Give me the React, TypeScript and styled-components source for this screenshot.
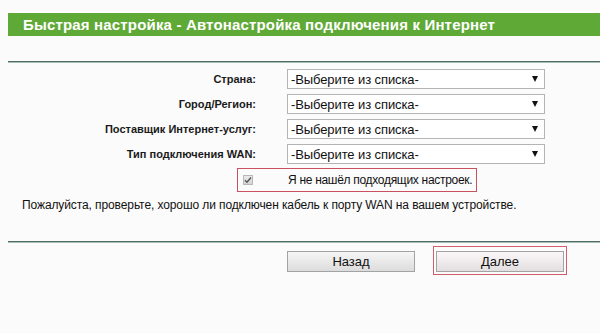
import React from "react";
import styled, { createGlobalStyle } from "styled-components";

const GlobalStyle = createGlobalStyle`
  html, body {
    margin: 0;
    padding: 0;
    background: #fbfbfb;
  }
  body {
    font-family: "Liberation Sans", Arial, sans-serif;
    color: #111;
  }
`;

const Page = styled.div`
  width: 600px;
  height: 333px;
  padding-left: 8px;
  box-sizing: border-box;
  overflow: hidden;
`;

const TitleBar = styled.div`
  margin-top: 13px;
  height: 23px;
  background: #5fa936;
  color: #fff;
  font-weight: bold;
  font-size: 15px;
  letter-spacing: 0.17px;
  line-height: 23px;
  padding-left: 15px;
  white-space: nowrap;
`;

const Rule = styled.div<{ $top: number }>`
  margin-top: ${(p) => p.$top}px;
  height: 2px;
  background: linear-gradient(#4d6c63 0 1px, #a9beb6 1px 2px);
`;

const Form = styled.div`
  display: grid;
  grid-template-columns: 248px 258px;
  column-gap: 31px;
  row-gap: 5px;
  margin-top: 6px;
`;

const Label = styled.div`
  text-align: right;
  font-weight: bold;
  font-size: 11px;
  line-height: 20px;
  white-space: nowrap;
  color: #1a1a1a;
`;

const SelectBox = styled.div`
  height: 20px;
  box-sizing: border-box;
  border: 1px solid #b4b4b4;
  background: #fff;
  display: flex;
  align-items: center;
  justify-content: space-between;
  padding: 0 6px 0 3px;
  font-size: 13px;
  letter-spacing: -0.1px;
  color: #111;
`;

const Arrow = styled.span`
  width: 0;
  height: 0;
  border-left: 3.5px solid transparent;
  border-right: 3.5px solid transparent;
  border-top: 6px solid #111;
`;

const CheckRow = styled.div`
  margin-top: 4px;
  padding-left: 229px;
`;

const CheckFrame = styled.label`
  width: 240px;
  height: 24px;
  box-sizing: border-box;
  border: 1px solid #c9525e;
  display: flex;
  align-items: center;
  font-size: 12px;
  letter-spacing: -0.3px;
  white-space: nowrap;
`;

const CheckMark = styled.span`
  width: 10px;
  height: 10px;
  margin-left: 5px;
  margin-right: 35px;
  box-sizing: border-box;
  border: 1px solid #b8b8b8;
  background: linear-gradient(#eaeaea, #d4d4d4);
  display: flex;
  align-items: center;
  justify-content: center;
`;

const Note = styled.p`
  margin: 6px 0 0;
  padding-left: 14px;
  font-size: 12px;
  letter-spacing: -0.1px;
  line-height: 14px;
  white-space: nowrap;
`;

const Buttons = styled.div`
  display: flex;
  align-items: flex-start;
  padding-left: 279px;
  margin-top: 1px;
`;

const Button = styled.button<{ $primary?: boolean }>`
  width: 128px;
  height: 21px;
  box-sizing: border-box;
  border: 1px solid #a3a3a3;
  background: ${(p) =>
    p.$primary
      ? "linear-gradient(#fbf7f8, #e3dfe0)"
      : "linear-gradient(#f6f6f6, #dcdcdc)"};
  font-family: "Liberation Sans", Arial, sans-serif;
  font-size: 13px;
  color: #111;
  padding: 0;
`;

const BackWrap = styled.div`
  margin-top: 7px;
`;

const NextFrame = styled.div`
  margin-left: 18px;
  margin-top: 2px;
  border: 1px solid #d05f6b;
  padding: 4px 2px 2px;
`;

const fields = [
  "Страна:",
  "Город/Регион:",
  "Поставщик Интернет-услуг:",
  "Тип подключения WAN:",
];

const App = () => {
  return (
    <Page>
      <GlobalStyle />
      <TitleBar>Быстрая настройка - Автонастройка подключения к Интернет</TitleBar>
      <Rule $top={25} />
      <Form>
        {fields.map((f) => (
          <React.Fragment key={f}>
            <Label>{f}</Label>
            <SelectBox>
              <span>-Выберите из списка-</span>
              <Arrow />
            </SelectBox>
          </React.Fragment>
        ))}
      </Form>
      <CheckRow>
        <CheckFrame>
          <CheckMark>
            <svg width="8" height="8" viewBox="0 0 8 8">
              <path d="M1 4.2 L3 6.3 L7 1.5" fill="none" stroke="#555" strokeWidth="1.4" />
            </svg>
          </CheckMark>
          Я не нашёл подходящих настроек.
        </CheckFrame>
      </CheckRow>
      <Note>
        Пожалуйста, проверьте, хорошо ли подключен кабель к порту WAN на вашем устройстве.
      </Note>
      <Rule $top={29} />
      <Buttons>
        <BackWrap>
          <Button>Назад</Button>
        </BackWrap>
        <NextFrame>
          <Button $primary>Далее</Button>
        </NextFrame>
      </Buttons>
    </Page>
  );
};

export default App;
